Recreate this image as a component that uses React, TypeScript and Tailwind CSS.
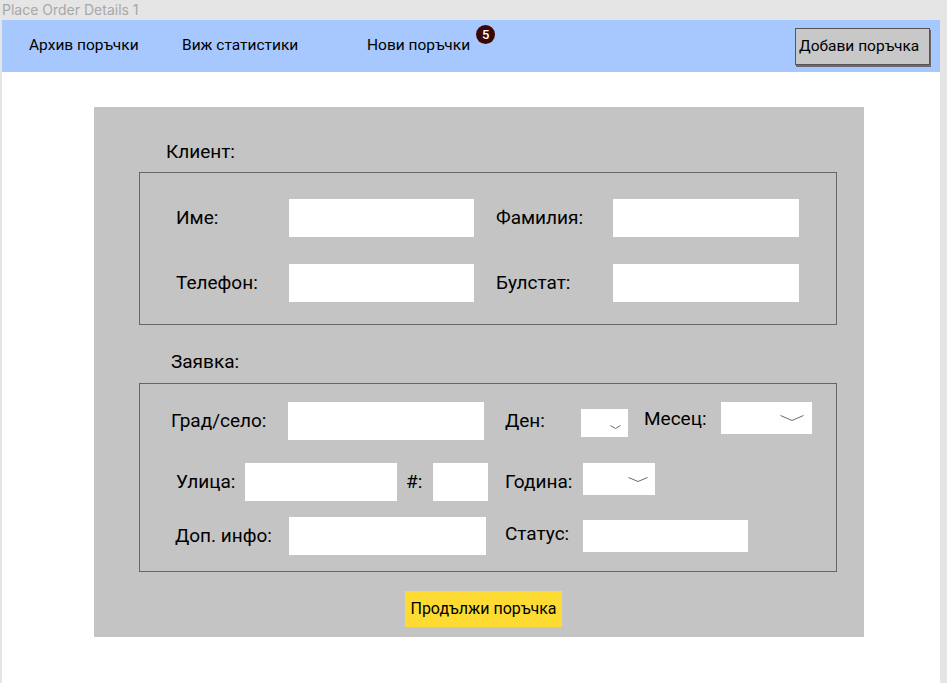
import React from 'react';

const Field = ({ w, h = 'h-[38px]' }: { w: string; h?: string }) => <div className={`${w} ${h} bg-white`} />;

function Chevron({ w, h }: { w: number; h: number }) {
  return (
    <svg width={w} height={h} viewBox={`0 0 ${w} ${h}`} className="overflow-visible">
      <polyline points={`0.5,0.5 ${w / 2},${h - 0.5} ${w - 0.5},0.5`} fill="none" stroke="#6b6b6b" strokeWidth="1" />
    </svg>
  );
}

export default function App() {
  return (
    <div className="w-[947px] h-[683px] bg-[#e5e5e5] flex flex-col overflow-hidden font-['Roboto',sans-serif] text-black">
      {/* figma frame title */}
      <div className="h-[20px] pl-[2px] text-[14px] leading-[20px] text-[#a8a8a8] font-['Inter',sans-serif]">
        Place Order Details 1
      </div>

      <div className="ml-[2px] w-[938px] flex-1 bg-white">
        {/* nav */}
        <div className="h-[52px] bg-[#a6c8ff] flex items-center pl-[27px] pr-[10px] text-[15.5px]">
          <span className="w-[153px]">Архив поръчки</span>
          <span className="w-[185px]">Виж статистики</span>
          <span className="relative">
            Нови поръчки
            <span className="absolute -right-[25px] -top-[9px] w-[19px] h-[19px] rounded-full bg-[#3a0606] text-white text-[13px] font-medium flex items-center justify-center">
              5
            </span>
          </span>
          <button className="ml-auto mt-[1px] w-[135px] h-[37px] bg-[#c8c8c8] border border-[#555] shadow-[1px_2px_0_#6a6a6a] text-[15.5px] text-left pl-[3px]">
            Добави поръчка
          </button>
        </div>

        {/* form panel */}
        <div className="mt-[35px] ml-[92px] w-[770px] h-[530px] bg-[#c4c4c4] pt-[33px] text-[19px]">
          <div className="ml-[72px] h-[24px] leading-[24px]">Клиент:</div>

          <div className="ml-[45px] mt-[8px] w-[698px] h-[153px] border border-[#666] pt-[26px] pl-[36px] flex flex-col gap-[27px]">
            <div className="flex items-center">
              <span className="w-[113px]">Име:</span>
              <Field w="w-[185px]" />
              <span className="ml-[22px] w-[117px]">Фамилия:</span>
              <Field w="w-[186px]" />
            </div>
            <div className="flex items-center">
              <span className="w-[113px]">Телефон:</span>
              <Field w="w-[185px]" />
              <span className="ml-[22px] w-[117px]">Булстат:</span>
              <Field w="w-[186px]" />
            </div>
          </div>

          <div className="ml-[77px] mt-[25px] h-[24px] leading-[24px]">Заявка:</div>

          <div className="ml-[45px] mt-[9px] w-[698px] h-[189px] border border-[#666] pt-[18px] flex flex-col">
            <div className="flex items-center h-[38px]">
              <div className="w-[365px] pl-[31px] flex items-center">
                <span className="w-[117px]">Град/село:</span>
                <Field w="w-[196px]" />
              </div>
              <span className="w-[76px]">Ден:</span>
              <div className="w-[47px] h-[28px] mt-[4px] bg-white flex items-end justify-end pr-[7px] pb-[8px]">
                <Chevron w={11} h={4} />
              </div>
              <span className="ml-[16px] w-[77px] -mt-[3px]">Месец:</span>
              <div className="w-[91px] h-[32px] -mt-[6px] bg-white flex items-center justify-end pr-[8px]">
                <Chevron w={24} h={6} />
              </div>
            </div>

            <div className="flex items-center h-[38px] mt-[23px]">
              <div className="w-[365px] pl-[36px] flex items-center">
                <span className="w-[69px]">Улица:</span>
                <Field w="w-[152px]" />
                <span className="ml-[9px] w-[27px]">#:</span>
                <Field w="w-[55px]" />
              </div>
              <span className="w-[78px]">Година:</span>
              <div className="w-[72px] h-[32px] -mt-[6px] bg-white flex items-center justify-end pr-[7px]">
                <Chevron w={20} h={5} />
              </div>
            </div>

            <div className="flex items-center h-[38px] mt-[16px]">
              <div className="w-[365px] pl-[35px] flex items-center">
                <span className="w-[114px]">Доп. инфо:</span>
                <Field w="w-[197px]" />
              </div>
              <span className="w-[78px] -mt-[4px]">Статус:</span>
              <Field w="w-[165px]" h="h-[32px]" />
            </div>
          </div>

          <button className="ml-[311px] mt-[19px] w-[157px] h-[36px] bg-[#fddb33] text-[16px]">
            Продължи поръчка
          </button>
        </div>
      </div>
    </div>
  );
}
